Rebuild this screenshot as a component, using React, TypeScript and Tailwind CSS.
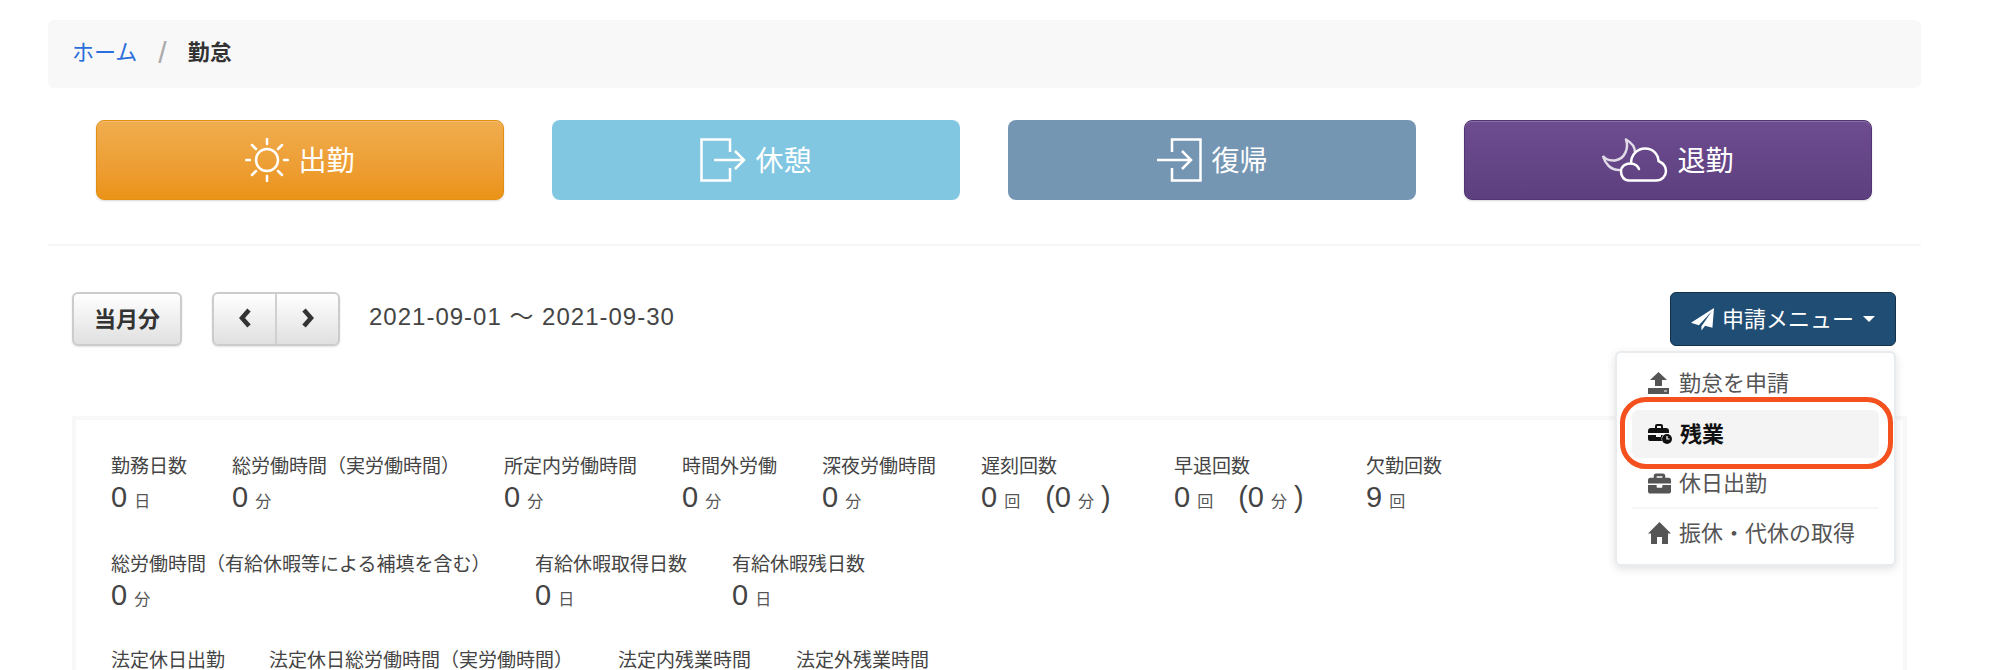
import type { ReactNode } from "react";
import { FaBriefcase } from "react-icons/fa";

const font = "font-['Liberation_Sans','Noto_Sans_CJK_JP',sans-serif]";

function SunIcon() {
  return (
    <svg width="44" height="44" viewBox="0 0 44 44" fill="none" stroke="white" strokeWidth="2.500" strokeLinecap="round">
      <circle cx="22" cy="22" r="11" />
      <path d="M22 1v5M22 38v5M1 22h4M39 22h4M7 7l4 4M33 33l4 4M37 7l-4 4M11 33l-4 4" />
    </svg>
  );
}

function DoorOutIcon() {
  return (
    <svg width="46" height="44" viewBox="0 0 46 44" fill="none" stroke="white" strokeWidth="2.500">
      <path d="M30 14V1.500H1.500v41H30V30" />
      <path d="M14 22h30M35 13l9 9-9 9" />
    </svg>
  );
}

function DoorInIcon() {
  return (
    <svg width="46" height="44" viewBox="0 0 46 44" fill="none" stroke="white" strokeWidth="2.500">
      <path d="M16 14V1.500h28.500v41H16V30" />
      <path d="M1 22h34M26 13l9 9-9 9" />
    </svg>
  );
}

function MoonCloudIcon() {
  return (
    <svg width="66" height="44" viewBox="0 0 66 44" fill="none" stroke="white" strokeWidth="2.500" strokeLinecap="round">
      <path d="M24 1.500C30 5 33 10 33 14M24 1.500C27 10 23 21 13 22.500 8 23 3 21 1 18 3 26 9 32 17 32" opacity="0.8" />
      <path d="M27 42.500C21 42.500 19 37 19 33.500 19 28 24 25 29 25.500 29 16 36 10.500 43 10.500 51 10.500 56 16 56.500 23 61 25 64 28.500 64 33 64 38 60 42.500 54 42.500Z" />
      <path d="M29 25.500C33 26 36 28 37 31" />
    </svg>
  );
}

function SendIcon() {
  return (
    <svg width="23" height="23" viewBox="0 0 22 22" fill="white">
      <path d="M22 0 0 14l7.500 2.500L20 3 10 17.500v4l3.500-4.500 7 2z" />
    </svg>
  );
}

function UploadIcon() {
  return (
    <svg width="21" height="22" viewBox="0 0 21 22" fill="#555">
      <path d="M10.500 0 19 8h-5v6H7V8H2z" />
      <path d="M0 16h21v6H0z" />
      <path d="M16 18.500h3v1h-3z" fill="white" />
    </svg>
  );
}

function OvertimeIcon() {
  return (
    <svg width="24" height="20" viewBox="0 0 24 20" fill="#111">
      <path d="M7 4V2a2 2 0 0 1 2-2h4a2 2 0 0 1 2 2v2h3a3 3 0 0 1 3 3v2H0V7a3 3 0 0 1 3-3zm2 0h4V2H9z" />
      <path d="M0 11h8v2h5v-2h2a6 6 0 0 0-1 6H2a2 2 0 0 1-2-2z" />
      <circle cx="19" cy="15" r="5" />
      <path d="M19 12v3h2.500" stroke="white" strokeWidth="1.200" fill="none" />
    </svg>
  );
}

function HomeIcon() {
  return (
    <svg width="23" height="22" viewBox="0 0 23 22" fill="#555">
      <path d="M11.500 0 23 11.500h-3V22h-6v-7H9v7H3V11.500H0z" />
    </svg>
  );
}

function ChevronIcon({ d }: { d: string }) {
  return (
    <svg width="16" height="22" viewBox="0 0 16 22" fill="none" stroke="#333" strokeWidth="4.500">
      <path d={d} />
    </svg>
  );
}

type StampProps = {
  label: string;
  icon: ReactNode;
  className: string;
};

function StampButton({ label, icon, className }: StampProps) {
  return (
    <button className={`flex h-20 w-[408px] items-center justify-center gap-[9px] rounded-lg text-[28px] text-white ${className}`}>
      {icon}
      <span className="mt-[3px]">{label}</span>
    </button>
  );
}

type Part = { num: string; unit: string };

type StatProps = {
  label: string;
  width: string;
  value?: Part;
  extra?: Part;
};

function Stat({ label, width, value, extra }: StatProps) {
  return (
    <div className={`${width} shrink-0`}>
      <div className="h-[24px] text-[19px] leading-[24px] whitespace-nowrap text-[#444]">{label}</div>
      {value && (
        <div className="mt-[2px] flex h-[32px] items-baseline text-[29px] leading-[32px] whitespace-nowrap text-[#444]">
          <span>{value.num}</span>
          <span className="ml-[7px] text-[16px] text-[#555]">{value.unit}</span>
          {extra && (
            <>
              <span className="ml-[25px] font-light">(</span>
              <span>{extra.num}</span>
              <span className="ml-[7px] text-[16px] text-[#555]">{extra.unit}</span>
              <span className="ml-[7px] font-light">)</span>
            </>
          )}
        </div>
      )}
    </div>
  );
}

function MenuItem({ icon, label }: { icon: ReactNode; label: string }) {
  return (
    <div className="flex h-[48px] items-center gap-[8px] pl-[31px] text-[22px] whitespace-nowrap text-[#555]">
      <span className="flex w-[23px]">{icon}</span>
      <span>{label}</span>
    </div>
  );
}

export default function App() {
  return (
    <div className={`h-[670px] w-[2000px] overflow-hidden bg-white pt-5 pl-12 ${font}`}>
      <div className="w-[1873px]">
        <nav className="flex h-[68px] items-center rounded-md bg-[#f8f8f8] pb-[4px] pl-6 text-[22px]">
          <a className="text-[#2a6fdb]">ホーム</a>
          <span className="mx-[21px] text-[30px] text-[#aaa]">/</span>
          <span className="font-bold text-[#333]">勤怠</span>
        </nav>

        <div className="mt-8 flex gap-12 pl-12">
          <StampButton
            label="出勤"
            icon={<SunIcon />}
            className="border border-[#e38d13] bg-gradient-to-b from-[#f0ad4e] to-[#eb9316] shadow-[inset_0_1px_0_rgba(255,255,255,0.2),0_1px_2px_rgba(0,0,0,0.15)]"
          />
          <StampButton label="休憩" icon={<DoorOutIcon />} className="bg-[#81c7e2]" />
          <StampButton label="復帰" icon={<DoorInIcon />} className="bg-[#7596b3]" />
          <StampButton
            label="退勤"
            icon={<MoonCloudIcon />}
            className="border border-[#4f3571] bg-gradient-to-b from-[#6d4c8f] to-[#5d3f7f] shadow-[inset_0_1px_0_rgba(255,255,255,0.2),0_1px_2px_rgba(0,0,0,0.15)]"
          />
        </div>

        <div className="mt-[44px] h-0.5 bg-[#f6f6f6]" />

        <div className="relative mt-[46px] flex h-[54px] items-center pl-6 pr-[25px]">
          <button className="h-[54px] w-[110px] rounded-md border-2 border-[#ccc] bg-gradient-to-b from-white to-[#e0e0e0] text-[22px] font-bold text-[#333] shadow-[0_1px_2px_rgba(0,0,0,0.12)]">
            当月分
          </button>
          <div className="ml-[30px] flex h-[54px] w-[128px] rounded-md border-2 border-[#ccc] bg-gradient-to-b from-white to-[#e0e0e0] shadow-[0_1px_2px_rgba(0,0,0,0.12)]">
            <button className="flex flex-1 items-center justify-center border-r-2 border-[#d0d0d0] pb-[3px]">
              <ChevronIcon d="M12 3 5 11l7 8" />
            </button>
            <button className="flex flex-1 items-center justify-center pb-[3px]">
              <ChevronIcon d="m4 3 7 8-7 8" />
            </button>
          </div>
          <span className="ml-[29px] -translate-y-[2px] text-[24px] tracking-[1px] text-[#444]">2021-09-01 〜 2021-09-30</span>

          <button className="ml-auto flex h-[54px] w-[226px] items-center justify-center gap-[8px] rounded-md border border-[#123049] bg-[#204d74] text-[22px] text-white">
            <SendIcon />
            <span>申請メニュー</span>
            <span className="ml-[1px] h-0 w-0 border-x-[6px] border-t-[6px] border-x-transparent border-t-white" />
          </button>

          <div className="absolute top-[59px] right-[25px] z-10 w-[281px] rounded-md border-2 border-[#e8ecef] bg-white pt-[6px] pb-[7px] shadow-[0_3px_10px_rgba(0,0,0,0.12)]">
            <MenuItem icon={<UploadIcon />} label="勤怠を申請" />
            <div className="relative mt-[3px]">
              <div className="mx-[15px] flex h-[48px] items-center gap-[8px] rounded-md bg-[#f4f4f4] pl-[16px] text-[22px] font-bold text-[#111]">
                <span className="flex w-[24px]">
                  <OvertimeIcon />
                </span>
                <span>残業</span>
              </div>
              <div className="absolute -top-[13px] right-[1px] -bottom-[11px] left-[3px] rounded-[26px] border-[5px] border-[#f4511e]" />
            </div>
            <div className="mt-px">
              <MenuItem icon={<FaBriefcase size={23} color="#555" />} label="休日出勤" />
            </div>
            <div className="mx-[15px] h-0.5 bg-[#f6f6f6]" />
            <MenuItem icon={<HomeIcon />} label="振休・代休の取得" />
          </div>
        </div>

        <div className="mt-[70px] ml-6 h-[400px] w-[1835px] border-4 border-[#f8f8f8] pt-[35px] pl-[35px]">
          <div className="flex">
            <Stat width="w-[121px]" label="勤務日数" value={{ num: "0", unit: "日" }} />
            <Stat width="w-[272px]" label="総労働時間（実労働時間）" value={{ num: "0", unit: "分" }} />
            <Stat width="w-[178px]" label="所定内労働時間" value={{ num: "0", unit: "分" }} />
            <Stat width="w-[140px]" label="時間外労働" value={{ num: "0", unit: "分" }} />
            <Stat width="w-[159px]" label="深夜労働時間" value={{ num: "0", unit: "分" }} />
            <Stat width="w-[193px]" label="遅刻回数" value={{ num: "0", unit: "回" }} extra={{ num: "0", unit: "分" }} />
            <Stat width="w-[192px]" label="早退回数" value={{ num: "0", unit: "回" }} extra={{ num: "0", unit: "分" }} />
            <Stat width="w-[100px]" label="欠勤回数" value={{ num: "9", unit: "回" }} />
          </div>
          <div className="mt-[40px] flex">
            <Stat width="w-[424px]" label="総労働時間（有給休暇等による補填を含む）" value={{ num: "0", unit: "分" }} />
            <Stat width="w-[197px]" label="有給休暇取得日数" value={{ num: "0", unit: "日" }} />
            <Stat width="w-[160px]" label="有給休暇残日数" value={{ num: "0", unit: "日" }} />
          </div>
          <div className="mt-[38px] flex">
            <Stat width="w-[158px]" label="法定休日出勤" />
            <Stat width="w-[349px]" label="法定休日総労働時間（実労働時間）" />
            <Stat width="w-[178px]" label="法定内残業時間" />
            <Stat width="w-[160px]" label="法定外残業時間" />
          </div>
        </div>
      </div>
    </div>
  );
}
